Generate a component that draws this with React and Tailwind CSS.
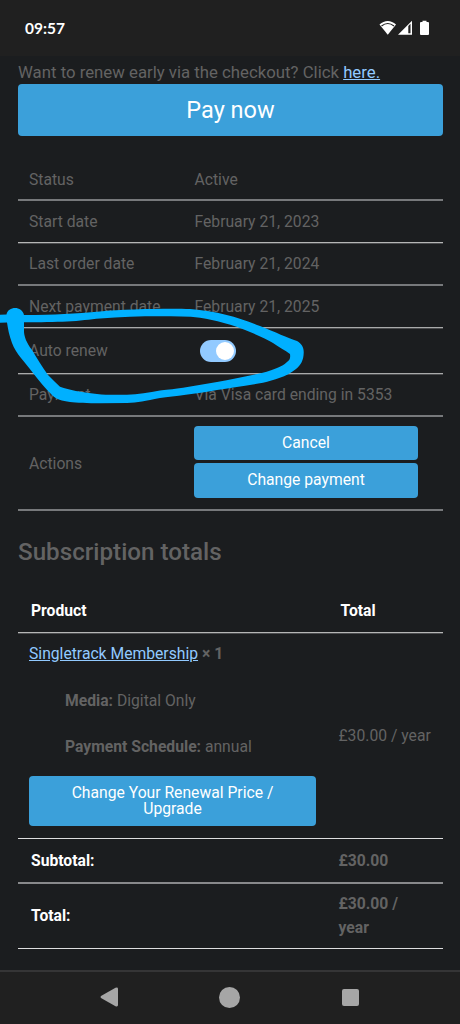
import clsx from 'clsx';

const details = [
  { label: 'Status', value: 'Active', row: 'h-[43px] border-b-2 border-b-[#77797b] pt-0.5' },
  { label: 'Start date', value: 'February 21, 2023', row: 'h-[42px] border-b border-b-[#b5b6b6]' },
  { label: 'Last order date', value: 'February 21, 2024', row: 'h-[43px] border-t border-t-[#4b4c4e] border-b-2 border-b-[#77797b]' },
  { label: 'Next payment date', value: 'February 21, 2025', row: 'h-[42px] border-b border-b-[#a9aaaa]' },
  { label: 'Auto renew', toggle: true, row: 'h-[46px] border-t border-t-[#4b4c4e] border-b border-b-[#a9aaaa]' },
  { label: 'Payment', value: 'Via Visa card ending in 5353', row: 'h-[43px] border-t border-t-[#4b4c4e] border-b-2 border-b-[#77797b]' },
];

function StatusBar() {
  return (
    <header className="flex h-14 items-center justify-between bg-[#202020] pl-[25px] pr-[31px]">
      <span className="font-['Lato'] text-[15.5px] font-bold leading-5 text-white">09:57</span>
      <div className="flex items-center">
        <svg width="18" height="16" viewBox="0 0 18 16" className="mr-px">
          <path d="M0.500 4.500C5.500-.200 12-.200 17 4.500L8.750 14.700Z" fill="#fff" />
          <path d="M2.500 6C6.500 2.800 11 2.800 15 6" fill="none" stroke="#202020" strokeWidth="1.200" />
        </svg>
        <svg width="15" height="16" viewBox="0 0 15 16" className="mr-[7px]">
          <path d="M14 0.700V14.700H0Z" fill="#fff" />
          <path d="M10.300 6L12.500 3.800V13.300H10.300Z" fill="#202020" />
        </svg>
        <svg width="9" height="16" viewBox="0 0 9 16">
          <path d="M2.500 0.700h4v1.300h1.500q1 0 1 1v11q0 1-1 1h-7q-1 0-1-1v-11q0-1 1-1h1.500z" fill="#fff" />
        </svg>
      </div>
    </header>
  );
}

function Button({ className, children }) {
  return (
    <button className={clsx('block rounded-[4px] bg-[#3ba0da] text-center text-white', className)}>{children}</button>
  );
}

function Toggle() {
  return (
    <span className="ml-[5.5px] flex h-[22px] w-9 items-center justify-end rounded-full bg-[#92caff] pr-0.5">
      <span className="size-[18px] rounded-full bg-white" />
    </span>
  );
}

// hand-drawn ring around the auto renew row
function Scribble() {
  return (
    <svg className="pointer-events-none absolute left-0 top-[300px]" width="310" height="110" viewBox="0 300 310 110">
      <path
        fill="#00b0ff"
        d="M0 314.800L6.500 314.500C8 306 22 305.500 24 315C55 315 75 313.500 100 311.500C125 309 170 308.300 190 309C218 311 240 318 260 326C275 332 288 338 297 341C302 344 304 348 303.700 353C303.500 360 301 365 296 369C286 377 274 380 263 382.700C245 386 230 388 217 390C195 394 175 396 160 398C145 401 138 402.500 127 403L100 403.200C88 403.200 76 403 70 402C62 401 56 399 53 396C45 388 39 381 33 373C25 362 16 354 12 343C9 335 8 329 7 322.500L0 322.700Z
        M24 322.300C40 322.300 55 322 67 321.500C80 321 90 319.300 100 318.500C120 316.800 140 316.300 160 316.300C175 316.300 188 316.300 200 317.700C208 318.800 216 320.700 223 322.700C233 325 242 328.500 250 332C260 336 267 339.500 273 343C279 347 285 350.500 290 354C290.500 358 290 360 287 362C284 365 281 366.500 277 368C270 371 263 373 257 374C244 377 230 379.500 217 382L183 387.700C172 389.500 165 389.500 160 390.500C149 392.500 138 394.300 127 394.700C115 395 106 395 97 394C80 392 70 390 60 386.700C56 383 52 379 48 375C42 367 37 358 32 350C26 342 24.500 337 24 332Z"
        fillRule="evenodd"
      />
    </svg>
  );
}

function NavBar() {
  return (
    <nav className="flex h-[54px] items-center justify-between border-t-2 border-[#353536] bg-[#202020] pb-0.5 pl-[100px] pr-[101px]">
      <svg width="18" height="20" viewBox="0 0 18 20" fill="#a6a6a6">
        <path d="M1 9L15.500 0.800Q18 0 18 2V18Q18 20 15.500 19.200L1 11Q0 10 1 9Z" />
      </svg>
      <span className="mr-px size-[21px] rounded-full bg-[#a6a6a6]" />
      <span className="size-[17px] rounded-[2px] bg-[#a6a6a6]" />
    </nav>
  );
}

export default function App() {
  return (
    <div className="relative flex h-[1024px] w-[460px] flex-col overflow-hidden bg-[#1b1d1f] font-['Roboto',sans-serif] text-[15.7px] leading-6 text-[#636363]">
      <StatusBar />
      <main className="flex-1 pl-[18px] pr-[17px]">
        <p className="h-[28px] whitespace-nowrap pt-[3.5px] text-[16.77px]">
          Want to renew early via the checkout? Click <a className="text-[#92caff] underline">here.</a>
        </p>
        <Button className="h-[52px] w-full text-[23.5px]">Pay now</Button>

        <section className="mt-[22px]">
          {details.map((d) => (
            <div key={d.label} className={clsx('flex items-center pl-[11px]', d.row)}>
              <span className="w-[165.5px]">{d.label}</span>
              {d.toggle ? <Toggle /> : <span>{d.value}</span>}
            </div>
          ))}
          <div className="flex h-[94px] border-b-2 border-[#77797b] pl-[11px]">
            <span className="w-[165px] pt-[35px]">Actions</span>
            <div className="flex flex-col gap-[3px] pt-[9px]">
              <Button className="h-[34px] w-[224px]">Cancel</Button>
              <Button className="h-[35px] w-[224px] pb-px">Change payment</Button>
            </div>
          </div>
        </section>

        <h2 className="mt-[25px] text-[24.2px] font-medium leading-8">Subscription totals</h2>

        <section className="mt-[21px]">
          <div className="flex h-[44px] items-center border-b border-[#b5b6b6] font-bold text-white">
            <span className="w-[310px] pl-[13px]">Product</span>
            <span className="pl-[12.5px]">Total</span>
          </div>
          <div className="flex h-[206px] border-t border-b border-t-[#4b4c4e] border-b-[#dededf]">
            <div className="w-[320.5px] pl-[11px] pt-2">
              <p>
                <a className="text-[#92caff] underline">Singletrack Membership</a> <b>× 1</b>
              </p>
              <p className="mt-[23px] pl-9"><b>Media:</b> Digital Only</p>
              <p className="mt-[22px] pl-9"><b>Payment Schedule:</b> annual</p>
              <Button className="mt-[17px] h-[50px] w-[287px] px-8 leading-4">Change Your Renewal Price / Upgrade</Button>
            </div>
            <span className="self-center">£30.00 / year</span>
          </div>
          <div className="flex h-[45px] items-center border-b-2 border-[#88898b] font-bold">
            <span className="w-[320.5px] pl-[13px] text-white">Subtotal:</span>
            <span>£30.00</span>
          </div>
          <div className="flex h-[65px] items-center border-b border-[#dededf] font-bold">
            <span className="w-[320.5px] pl-[13px] text-white">Total:</span>
            <span className="w-[70px]">£30.00 / year</span>
          </div>
        </section>
      </main>
      <NavBar />
      <Scribble />
    </div>
  );
}
